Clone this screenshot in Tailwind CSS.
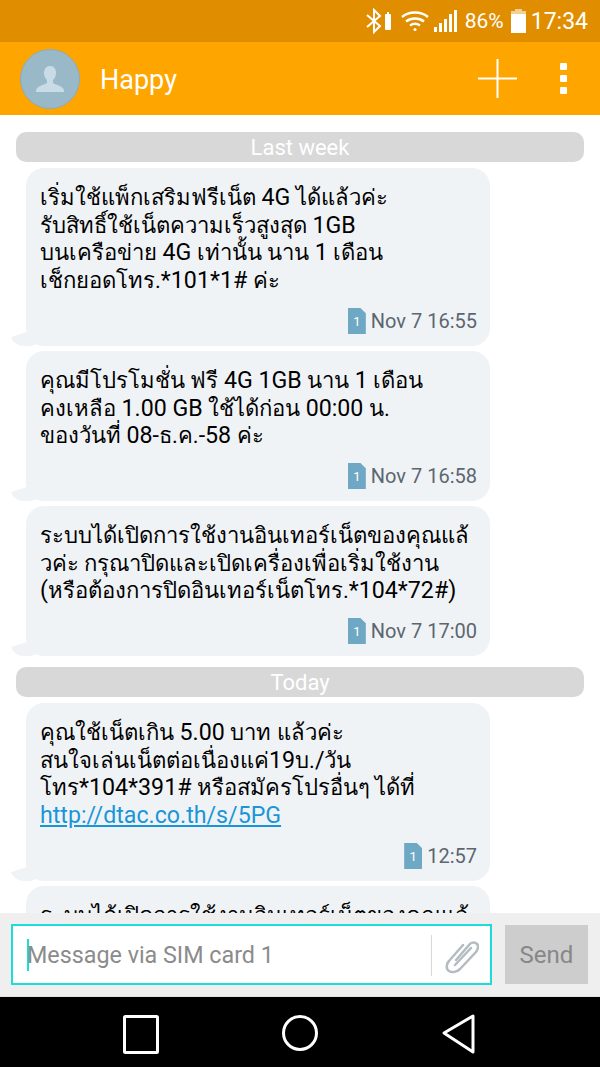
<!DOCTYPE html>
<html lang="th">
<head>
    <meta charset="UTF-8">
    <meta name="viewport" content="width=device-width, initial-scale=1.0">
    <title>Happy</title>
    <script src="https://cdn.jsdelivr.net/npm/@tailwindcss/browser@4"></script>
</head>
<body class="bg-white font-[Roboto,'Noto_Sans',sans-serif]">
<div class="w-[600px] h-[1067px] flex flex-col overflow-hidden">

    <!-- Status bar -->
    <div class="h-[42px] shrink-0 bg-[#e08e00] flex items-center justify-end text-white pr-[12px]">
        <svg class="w-[26px] h-[26px] mr-[9px]" viewBox="0 0 26 26" fill="none">
            <path d="M1 7l13 11-6 6V2l6 6L1 19" stroke="#fff" stroke-width="2"/>
            <rect x="19" y="6" width="6" height="16" rx="1" fill="#fff"/>
            <rect x="21" y="4" width="2" height="2" fill="#fff"/>
        </svg>
        <svg class="w-[28px] h-[22px] mr-[5px]" viewBox="0 0 28 22" fill="none" stroke="#fff" stroke-width="2.4">
            <path d="M1 7c7-6 19-6 26 0"/>
            <path d="M5 11.500c5-4 13-4 18 0"/>
            <path d="M9 15.500c3-2 7-2 10 0"/>
            <circle cx="14" cy="19.500" r="1.500" fill="#fff" stroke="none"/>
        </svg>
        <svg class="w-[25px] h-[24px] mr-[6px]" viewBox="0 0 25 24" fill="#fff">
            <rect x="0" y="18" width="3" height="5"/>
            <rect x="5" y="14" width="3" height="9"/>
            <rect x="10" y="10" width="3" height="13"/>
            <rect x="15" y="5" width="3" height="18"/>
            <rect x="20" y="1" width="3" height="22"/>
        </svg>
        <span class="text-[21px] leading-none mr-[7px]">86%</span>
        <svg class="w-[15px] h-[24px] mr-[5px]" viewBox="0 0 15 24">
            <rect x="4" y="0" width="7" height="3" fill="#f5cf8f"/>
            <rect x="0" y="2" width="15" height="3" fill="#f5cf8f"/>
            <rect x="0" y="5" width="15" height="19" fill="#fff"/>
        </svg>
        <span class="text-[23px] leading-none">17:34</span>
    </div>

    <!-- Header -->
    <div class="h-[73px] shrink-0 bg-[#ffa500] flex items-center pl-[20px] pr-[33px] text-white">
        <div class="w-[60px] h-[60px] rounded-full bg-[#99b9c9] border border-[#8aacbd] flex items-center justify-center">
            <svg class="w-[28px] h-[26px]" viewBox="0 0 28 26" fill="#c9dce6">
                <path d="M14 0c-4 0-6 3-6 7 0 3 1 5 3 7v3c-3 2-11 3-11 8v1h28v-1c0-5-8-6-11-8v-3c2-2 3-4 3-7 0-4-2-7-6-7z"/>
            </svg>
        </div>
        <div class="text-[27px] ml-[20px] flex-1 pt-[3px]">Happy</div>
        <svg class="w-[39px] h-[39px]" viewBox="0 0 39 39" stroke="#fff" stroke-width="2">
            <path d="M19.500 0v39M0 19.500h39"/>
        </svg>
        <div class="ml-[43px] flex flex-col gap-[5px]">
            <div class="w-[7px] h-[7px] bg-white rounded-[1px]"></div>
            <div class="w-[7px] h-[7px] bg-white rounded-[1px]"></div>
            <div class="w-[7px] h-[7px] bg-white rounded-[1px]"></div>
        </div>
    </div>

    <!-- Messages -->
    <div class="flex-1 overflow-hidden px-[16px] pt-[17px] text-black text-[22.1px] leading-[27.5px]">
        <div class="h-[30px] rounded-[10px] bg-[#d8d8d8] text-white text-center text-[22px] leading-[32px]">Last week</div>

        <div class="relative mt-[6px] ml-[10px] w-[464px] h-[178px] bg-[#f0f3f6] rounded-[18px] px-[14px] pt-[16px]">
            <p class="[&>span]:text-[23.2px] [&>span]:leading-none">เริ่มใช้แพ็กเสริมฟรีเน็ต <span>4G</span> ได้แล้วค่ะ<br>รับสิทธิ์ใช้เน็ตความเร็วสูงสุด <span>1GB</span><br>บนเครือข่าย <span>4G</span> เท่านั้น นาน <span>1</span> เดือน<br>เช็กยอดโทร.<span>*101*1#</span> ค่ะ</p>
            <div class="absolute right-[13px] bottom-[12px] flex items-center text-[#5b6670] text-[20px] leading-none">
                <div class="w-[18px] h-[26px] bg-[#6ea8c4] text-white text-[13px] flex items-center justify-center mr-[5px] [clip-path:polygon(0_0,70%_0,100%_20%,100%_100%,0_100%)]">1</div>Nov 7 16:55
            </div>
            <div class="absolute left-[-16px] bottom-0 w-[30px] h-[14px] bg-[#f0f3f6] rounded-bl-[14px] rounded-br-[10px] [clip-path:polygon(0_40%,55%_0,100%_0,100%_100%,0_100%)]"></div>
        </div>

        <div class="relative mt-[5px] ml-[10px] w-[464px] h-[150px] bg-[#f0f3f6] rounded-[18px] px-[14px] pt-[16px]">
            <p class="[&>span]:text-[23.2px] [&>span]:leading-none">คุณมีโปรโมชั่น ฟรี <span>4G 1GB</span> นาน <span>1</span> เดือน<br>คงเหลือ <span>1.00 GB</span> ใช้ได้ก่อน <span>00:00</span> น.<br>ของวันที่ <span>08-</span>ธ.ค.<span>-58</span> ค่ะ</p>
            <div class="absolute right-[13px] bottom-[12px] flex items-center text-[#5b6670] text-[20px] leading-none">
                <div class="w-[18px] h-[26px] bg-[#6ea8c4] text-white text-[13px] flex items-center justify-center mr-[5px] [clip-path:polygon(0_0,70%_0,100%_20%,100%_100%,0_100%)]">1</div>Nov 7 16:58
            </div>
            <div class="absolute left-[-16px] bottom-0 w-[30px] h-[14px] bg-[#f0f3f6] rounded-bl-[14px] rounded-br-[10px] [clip-path:polygon(0_40%,55%_0,100%_0,100%_100%,0_100%)]"></div>
        </div>

        <div class="relative mt-[5px] ml-[10px] w-[464px] h-[150px] bg-[#f0f3f6] rounded-[18px] px-[14px] pt-[16px]">
            <p class="whitespace-nowrap [&>span]:text-[23.2px] [&>span]:leading-none">ระบบได้เปิดการใช้งานอินเทอร์เน็ตของคุณแล้<br>วค่ะ กรุณาปิดและเปิดเครื่องเพื่อเริ่มใช้งาน<br><span>(</span>หรือต้องการปิดอินเทอร์เน็ตโทร.<span>*104*72#)</span></p>
            <div class="absolute right-[13px] bottom-[12px] flex items-center text-[#5b6670] text-[20px] leading-none">
                <div class="w-[18px] h-[26px] bg-[#6ea8c4] text-white text-[13px] flex items-center justify-center mr-[5px] [clip-path:polygon(0_0,70%_0,100%_20%,100%_100%,0_100%)]">1</div>Nov 7 17:00
            </div>
            <div class="absolute left-[-16px] bottom-0 w-[30px] h-[14px] bg-[#f0f3f6] rounded-bl-[14px] rounded-br-[10px] [clip-path:polygon(0_40%,55%_0,100%_0,100%_100%,0_100%)]"></div>
        </div>

        <div class="mt-[11px] h-[30px] rounded-[10px] bg-[#d8d8d8] text-white text-center text-[22px] leading-[32px]">Today</div>

        <div class="relative mt-[6px] ml-[10px] w-[464px] h-[178px] bg-[#f0f3f6] rounded-[18px] px-[14px] pt-[16px]">
            <p class="[&>span]:text-[23.2px] [&>span]:leading-none">คุณใช้เน็ตเกิน <span>5.00</span> บาท แล้วค่ะ<br>สนใจเล่นเน็ตต่อเนื่องแค่<span>19</span>บ.<span>/</span>วัน<br>โทร<span>*104*391#</span> หรือสมัครโปรอื่นๆ ได้ที่<br><a class="text-[23.2px] leading-none text-[#1a96d8] underline">http://dtac.co.th/s/5PG</a></p>
            <div class="absolute right-[13px] bottom-[12px] flex items-center text-[#5b6670] text-[20px] leading-none">
                <div class="w-[18px] h-[26px] bg-[#6ea8c4] text-white text-[13px] flex items-center justify-center mr-[5px] [clip-path:polygon(0_0,70%_0,100%_20%,100%_100%,0_100%)]">1</div>12:57
            </div>
            <div class="absolute left-[-16px] bottom-0 w-[30px] h-[14px] bg-[#f0f3f6] rounded-bl-[14px] rounded-br-[10px] [clip-path:polygon(0_40%,55%_0,100%_0,100%_100%,0_100%)]"></div>
        </div>

        <div class="relative mt-[5px] ml-[10px] w-[464px] h-[150px] bg-[#f0f3f6] rounded-[18px] px-[14px] pt-[16px]">
            <p class="whitespace-nowrap">ระบบได้เปิดการใช้งานอินเทอร์เน็ตของคุณแล้</p>
        </div>
    </div>

    <!-- Composer -->
    <div class="h-[84px] shrink-0 bg-[#eeefee] border-b border-[#e2e2e2] flex items-center pl-[11px] pr-[12px]">
        <div class="w-[481px] h-[61px] bg-white border-2 border-[#1fdcdc] flex items-center pl-[14px] relative">
            <div class="w-[2px] h-[32px] bg-[#1fdcdc]"></div>
            <span class="text-[23.3px] text-[#8b8b8b] ml-[-2px] pt-[1px]">Message via SIM card 1</span>
            <div class="absolute left-[418px] top-[9px] w-[1px] h-[41px] bg-[#d8d8d8]"></div>
            <svg class="absolute right-[11px] top-[12px] w-[34px] h-[36px]" viewBox="0 0 34 36" fill="none" stroke="#b3bcc1" stroke-width="2.500" stroke-linecap="round">
                <path d="M11 22L24 7c2-3 6-3 8-1s1 5-1 8L15 31c-3 3-8 4-11 2s-3-7 0-10L18 7"/>
                <path d="M10 27L26 10"/>
            </svg>
        </div>
        <div class="ml-[13px] w-[83px] h-[59px] bg-[#cdcdcd] text-[#878787] text-[24px] flex items-center justify-center">Send</div>
    </div>

    <!-- Nav bar -->
    <div class="h-[70px] shrink-0 bg-black relative flex items-center justify-center">
        <svg class="w-[600px] h-[70px]" viewBox="0 0 600 70" fill="none" stroke="#fff" stroke-width="3">
            <rect x="124.500" y="19.500" width="33" height="36" rx="1"/>
            <circle cx="300" cy="36" r="16.500"/>
            <path d="M444 36l29-17v36z" stroke-linejoin="round"/>
        </svg>
    </div>
</div>
</body>
</html>
